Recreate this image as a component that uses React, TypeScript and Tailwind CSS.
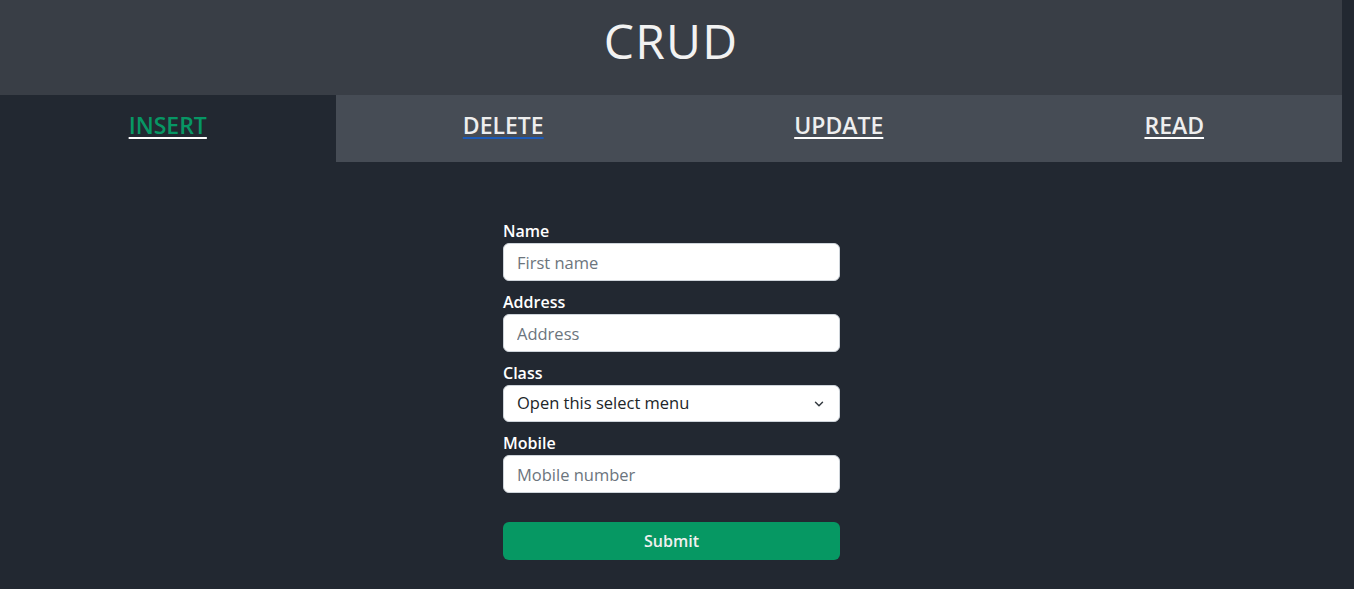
import { ChevronDown } from "lucide-react";

const tabs = [
  { name: "INSERT", active: true, underline: "decoration-white" },
  { name: "DELETE", active: false, underline: "decoration-[#1d5bb8]" },
  { name: "UPDATE", active: false, underline: "decoration-white" },
  { name: "READ", active: false, underline: "decoration-white" },
];

const Field = ({ label, placeholder }: { label: string; placeholder: string }) => (
  <div className="flex flex-col mb-[9px]">
    <label className="text-[16px] leading-6 font-semibold text-white">{label}</label>
    <input
      placeholder={placeholder}
      className="h-[38px] w-full rounded-md border border-[#ced4da] bg-white px-[13px] text-[16.5px] text-[#212529] placeholder:text-[#6c757d] outline-none"
    />
  </div>
);

export default function App() {
  return (
    <div className="min-h-[589px] bg-[#222831] pr-[12px]" style={{ fontFamily: "'Open Sans', 'Noto Sans', sans-serif" }}>
      {/* Header */}
      <header className="h-[95px] bg-[#393e46] flex items-center justify-center">
        <h1 className="text-[48px] text-[#f2f2f2] font-medium tracking-wide pb-[14px]">CRUD</h1>
      </header>

      {/* Tabs */}
      <nav className="grid grid-cols-4 h-[67px]">
        {tabs.map((tab) => (
          <a
            key={tab.name}
            href="#"
            className={`flex items-center justify-center pb-[6px] text-[23px] font-semibold underline underline-offset-[3px] decoration-[1.5px] ${tab.underline} ${
              tab.active ? "bg-[#222831] text-[#079664]" : "bg-[#464c55] text-[#eeeeee]"
            }`}
          >
            {tab.name}
          </a>
        ))}
      </nav>

      {/* Form */}
      <div className="flex justify-center pt-[57px] pb-[30px]">
        <form className="w-[337px] flex flex-col ml-[1px]" onSubmit={(e) => e.preventDefault()}>
          <Field label="Name" placeholder="First name" />
          <Field label="Address" placeholder="Address" />
          <div className="flex flex-col mb-[9px]">
            <label className="text-[16px] leading-6 font-semibold text-white">Class</label>
            <div className="relative">
              <select className="h-[37px] w-full appearance-none rounded-md border border-[#ced4da] bg-white pl-[13px] text-[16.5px] font-medium text-[#212529] outline-none">
                <option>Open this select menu</option>
                <option>One</option>
                <option>Two</option>
              </select>
              <ChevronDown className="absolute right-[14px] top-[12px] w-[14px] h-[14px] text-[#343a40]" strokeWidth={2.5} />
            </div>
          </div>
          <Field label="Mobile" placeholder="Mobile number" />
          <button
            type="submit"
            className="mt-[20px] h-[38px] w-full rounded-md bg-[#069863] text-[16px] font-semibold text-[#f0f0f0]"
          >
            Submit
          </button>
        </form>
      </div>
    </div>
  );
}
